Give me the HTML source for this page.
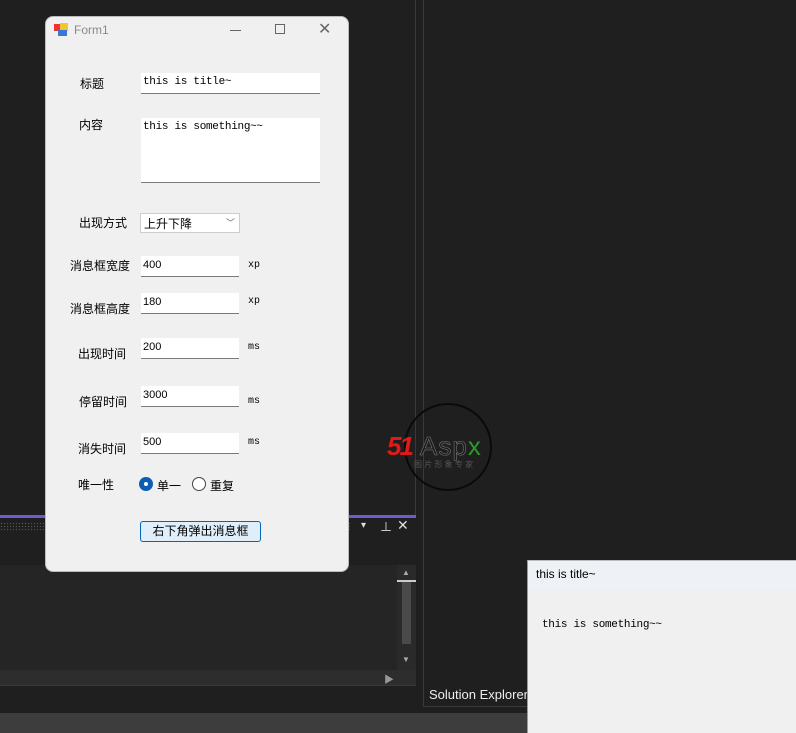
<!DOCTYPE html>
<html><head><meta charset="utf-8"><style>
*{margin:0;padding:0;box-sizing:border-box}
body{width:796px;height:733px;background:#1f1f1f;position:relative;overflow:hidden;font-family:"Liberation Sans","Noto Sans CJK SC",sans-serif}
.a{position:absolute}
.lbl{position:absolute;font-size:12px;color:#000;white-space:nowrap}
.inp{position:absolute;background:#fff;border-bottom:1px solid #7a7a7a;font-size:11px;padding:0 2px;line-height:19px;color:#000}
.mono{font-family:"Liberation Mono","Noto Sans CJK SC",monospace;font-size:11px;letter-spacing:-0.3px}
.unit{position:absolute;font-family:"Liberation Mono",monospace;font-size:10px;color:#000}
</style></head><body>
<div class="a" style="left:415px;top:0;width:1px;height:516px;background:#3a3a3a"></div>
<div class="a" style="left:423px;top:0;width:1px;height:707px;background:#3a3a3a"></div>
<div class="a" style="left:423px;top:706px;width:110px;height:1px;background:#3a3a3a"></div>
<div class="a" style="left:0;top:515px;width:416px;height:3px;background:#6e5bd1"></div>
<div class="a" style="left:0;top:522px;width:350px;height:10px;background-image:radial-gradient(#555 0.7px,transparent 0.8px);background-size:3px 3px"></div>
<div class="a" style="left:361px;top:520px;color:#ddd;font-size:10px">▾</div>
<div class="a" style="left:380px;top:518px;color:#ddd;font-size:12px">⊥</div>
<div class="a" style="left:397px;top:517px;color:#ddd;font-size:14px">✕</div>
<div class="a" style="left:0;top:565px;width:397px;height:105px;background:#252526"></div>
<div class="a" style="left:397px;top:565px;width:19px;height:105px;background:#2a2a2a"></div>
<div class="a" style="left:402px;top:582px;width:9px;height:62px;background:#4a4a4a"></div>
<div class="a" style="left:397px;top:580px;width:19px;height:2px;background:#ccc"></div>
<div class="a" style="left:402px;top:568px;color:#aaa;font-size:8px">▲</div>
<div class="a" style="left:402px;top:655px;color:#aaa;font-size:8px">▼</div>
<div class="a" style="left:0;top:670px;width:416px;height:15px;background:#2d2d2d"></div>
<div class="a" style="left:384px;top:671px;color:#999;font-size:10px">▶</div>
<div class="a" style="left:0;top:685px;width:416px;height:1px;background:#3a3a3a"></div>
<div class="a" style="left:0;top:713px;width:796px;height:20px;background:#3d3d3d"></div>
<div class="a" style="left:429px;top:687px;color:#eee;font-size:13px">Solution Explorer</div>
<!-- watermark -->
<div class="a" style="left:404px;top:403px;width:88px;height:88px;border:2px solid #0a0a0a;border-radius:50%"></div>
<div class="a" style="left:387px;top:431px;font-size:26px;font-weight:bold;font-style:italic;color:#e01a1a;letter-spacing:-2px">51</div>
<div class="a" style="left:420px;top:431px;font-size:26px;color:#1a1a1a;letter-spacing:1px;-webkit-text-stroke:0.6px #777">Asp<span style="color:#2a9a2a;-webkit-text-stroke:0">x</span></div>
<div class="a" style="left:414px;top:459px;font-size:8px;color:#555">图 片 形 象 专 家</div>
<!-- Form -->
<div class="a" style="left:45px;top:16px;width:304px;height:556px;background:#f0f0f0;border-radius:8px;border:1px solid #bbb"></div>
<div class="a" style="left:54px;top:24px;width:7px;height:7px;background:#e33"></div>
<div class="a" style="left:60px;top:23px;width:8px;height:8px;background:#f4c430"></div>
<div class="a" style="left:58px;top:30px;width:9px;height:6px;background:#3a78d8"></div>
<div class="lbl" style="left:74px;top:23px;color:#888;font-size:12px">Form1</div>
<div class="a" style="left:230px;top:30px;width:11px;height:1px;background:#666"></div>
<div class="a" style="left:275px;top:24px;width:10px;height:10px;border:1px solid #666"></div>
<div class="a" style="left:318px;top:19px;color:#666;font-size:16px">✕</div>

<div class="lbl" style="left:80px;top:75px">标题</div>
<div class="inp mono" style="left:141px;top:73px;width:179px;height:21px">this is title~</div>
<div class="lbl" style="left:79px;top:116px">内容</div>
<div class="inp mono" style="left:141px;top:118px;width:179px;height:65px;padding-top:0">this is something~~</div>
<div class="lbl" style="left:79px;top:214px">出现方式</div>
<div class="a" style="left:140px;top:213px;width:100px;height:20px;background:#fff;border:1px solid #ccc;font-size:12px;padding:1px 3px">上升下降<span style="position:absolute;right:4px;top:2px;font-size:9px;color:#666">﹀</span></div>

<div class="lbl" style="left:70px;top:257px">消息框宽度</div>
<div class="inp" style="left:141px;top:256px;width:98px;height:21px">400</div>
<div class="unit" style="left:248px;top:260px">xp</div>
<div class="lbl" style="left:70px;top:300px">消息框高度</div>
<div class="inp" style="left:141px;top:293px;width:98px;height:21px">180</div>
<div class="unit" style="left:248px;top:296px">xp</div>
<div class="lbl" style="left:78px;top:345px">出现时间</div>
<div class="inp" style="left:141px;top:338px;width:98px;height:21px">200</div>
<div class="unit" style="left:248px;top:342px">ms</div>
<div class="lbl" style="left:79px;top:393px">停留时间</div>
<div class="inp" style="left:141px;top:386px;width:98px;height:21px">3000</div>
<div class="unit" style="left:248px;top:396px">ms</div>
<div class="lbl" style="left:78px;top:440px">消失时间</div>
<div class="inp" style="left:141px;top:433px;width:98px;height:21px">500</div>
<div class="unit" style="left:248px;top:437px">ms</div>

<div class="lbl" style="left:78px;top:476px">唯一性</div>
<div class="a" style="left:139px;top:477px;width:14px;height:14px;border-radius:50%;background:#0a5fb4"></div>
<div class="a" style="left:144px;top:482px;width:4px;height:4px;border-radius:50%;background:#fff"></div>
<div class="lbl" style="left:157px;top:477px">单一</div>
<div class="a" style="left:192px;top:477px;width:14px;height:14px;border-radius:50%;border:1px solid #444;background:#fff"></div>
<div class="lbl" style="left:210px;top:477px">重复</div>
<div class="a" style="left:140px;top:521px;width:121px;height:21px;border:1px solid #0067c0;border-radius:3px;background:#e0eef9;font-size:12px;text-align:center;line-height:19px">右下角弹出消息框</div>

<div class="a" style="left:527px;top:560px;width:269px;height:173px;background:#f0f0f0;border-left:1px solid #999;border-top:1px solid #bbb"></div>
<div class="a" style="left:528px;top:561px;width:268px;height:28px;background:#eef2f7"></div>
<div class="lbl" style="left:536px;top:567px">this is title~</div>
<div class="lbl mono" style="left:542px;top:619px">this is something~~</div>
</body></html>
